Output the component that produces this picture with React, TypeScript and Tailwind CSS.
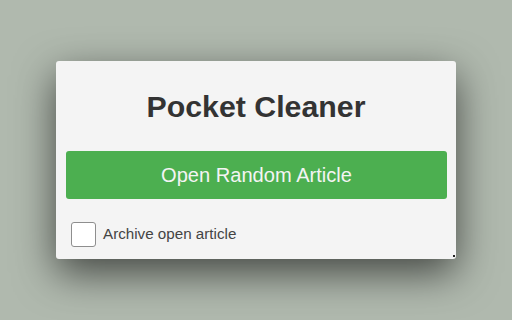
export default function App() {
  return (
    <div className="w-[512px] h-[320px] bg-[#b0b9ae] flex items-start justify-center pt-[61px] font-['Liberation_Sans',Arial,sans-serif]">
      {/* popup card */}
      <div className="relative w-[400px] h-[198px] bg-[#f4f4f4] rounded-[3px] shadow-[0_14px_40px_rgba(0,0,0,0.62)] px-[10px] pt-[28px] flex flex-col">
        <h1 className="text-center text-[30.3px] leading-[36px] font-bold text-[#333]">Pocket Cleaner</h1>

        <button
          type="button"
          className="mt-[26px] h-[48px] w-[381px] rounded-[3px] bg-[#4caf50] text-[20.1px] text-[#f4f4f4]"
        >
          Open Random Article
        </button>

        <label className="mt-[23px] ml-[5px] flex items-center gap-[7px]">
          <span className="w-[25px] h-[25px] rounded-[3px] border-[1.5px] border-[#8e8e8e] bg-white" />
          <span className="text-[15.2px] text-[#444]">Archive open article</span>
        </label>

        {/* resize corner dot */}
        <span className="absolute right-[1px] bottom-[2px] w-[2px] h-[2px] bg-[#222]" />
      </div>
    </div>
  );
}
